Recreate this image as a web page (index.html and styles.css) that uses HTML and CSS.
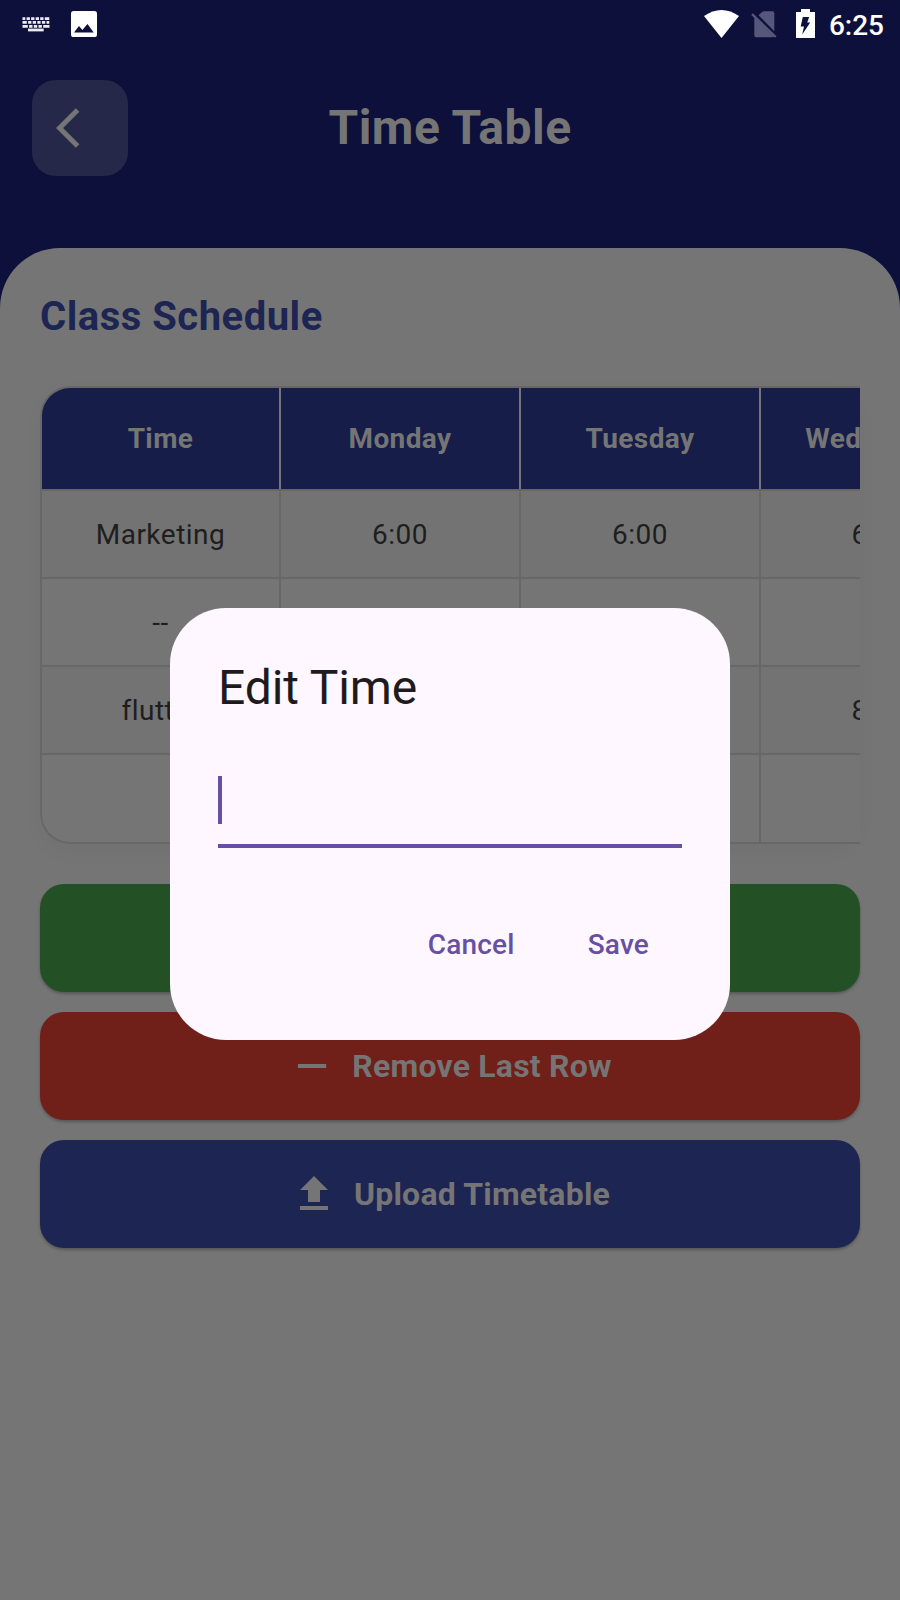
FILE: index.html
```html
<!DOCTYPE html>
<html lang="en">
<head>
<meta charset="utf-8">
<title>Time Table</title>
<link rel="stylesheet" href="styles.css">
</head>
<body>
<div class="screen">
  <div class="status">
    <div class="status-group">
      <svg class="kbd" width="28" height="15" viewBox="0 0 28 15">
        <g fill="none" stroke="#fff" stroke-opacity=".92" stroke-width="2.8">
          <path d="M.5 1.6H28" stroke-dasharray="2.800 1.300 3.300 1.200 3.300 1.300 3.300 1.200 3.300 1.300 4.500 20"/>
          <path d="M.5 5.400H28" stroke-dasharray="4.300 1.300 3.300 1.300 3.300 1.300 3.300 1.300 3.300 1.300 2.800 20"/>
          <path d="M.5 9.300H28" stroke-dasharray="5.300 1.300 3.400 1.300 3.400 1.300 3.400 1.300 6.300 20"/>
          <path d="M6 13H21.700"/>
        </g>
      </svg>
      <svg class="photo" width="26" height="26" viewBox="0 0 26 26"><rect width="26" height="26" rx="2.6" fill="#fff"/><path d="M3 21.4L8 15l3.4 4.1L16.500 13l6.200 8.400z" fill="#0c103a"/></svg>
    </div>
    <div class="status-group">
      <svg class="wifi" width="35" height="28" viewBox="0 0 35 28"><path d="M0 6Q17.500-6 35 6L17.500 28z" fill="#fff"/></svg>
      <svg class="sim" width="26" height="27" viewBox="0 0 26 27"><g fill="#55587a"><path d="M7.600 4.200L11 1q.9-.8 2-.8h8.300q2 0 2 2v18z"/><path d="M3.300 6.200L23 25.500q-.5.800-1.700.8H5.300q-2 0-2-2z"/></g><path d="M1 3.200L24.800 26" stroke="#55587a" stroke-width="2.300"/></svg>
      <svg class="battery" width="19" height="29" viewBox="0 0 19 29"><path d="M0 3h5V0h9v3h5v26H0z" fill="#fff"/><path d="M6.800 8h6.400l-2 5.500h3L6.200 25.500l1.800-8H4.700z" fill="#0c103a"/></svg>
      <span class="clock">6:25</span>
    </div>
  </div>

  <header class="header">
    <div class="back"><svg width="48" height="48" viewBox="0 0 24 24"><path d="M11.670 3.870L9.900 2.100 0 12l9.900 9.900 1.770-1.770L3.540 12z" fill="#757575"/></svg></div>
    <h1 class="title">Time Table</h1>
  </header>

  <main class="panel">
    <h2 class="heading">Class Schedule</h2>
    <div class="table-shadow">
      <div class="table-clip">
        <div class="table">
          <div class="row head"><div>Time</div><div>Monday</div><div>Tuesday</div><div>Wednesday</div></div>
          <div class="row odd"><div>Marketing</div><div>6:00</div><div>6:00</div><div>6:00</div></div>
          <div class="row"><div>--</div><div></div><div></div><div></div></div>
          <div class="row odd"><div>flutter</div><div></div><div></div><div>8:00</div></div>
          <div class="row"><div></div><div></div><div></div><div></div></div>
        </div>
      </div>
    </div>
    <div class="actions">
      <div class="action add"></div>
      <div class="action remove"><svg width="48" height="48" viewBox="0 0 24 24"><path d="M19.100 13H5v-2h14.100z" fill="#757575"/></svg><span>Remove Last Row</span></div>
      <div class="action upload"><svg width="48" height="48" viewBox="0 0 24 24"><path d="M9 16h6v-6h4l-7-7-7 7h4zm-4 2h14v2H5z" fill="#757575"/></svg><span>Upload Timetable</span></div>
    </div>
  </main>

  <div class="overlay">
    <div class="dialog">
      <div class="dialog-title">Edit Time</div>
      <div class="field"><div class="caret"></div></div>
      <div class="dialog-actions"><span>Cancel</span><span>Save</span></div>
    </div>
  </div>
</div>
</body>
</html>
```
FILE: styles.css
```css
* { box-sizing: border-box; }
body { margin: 0; font-family: Roboto, sans-serif; }
h1, h2 { margin: 0; }
svg { display: block; flex: none; }

.screen {
  position: relative;
  width: 900px;
  height: 1600px;
  overflow: hidden;
  background: #0d103b;
  display: flex;
  flex-direction: column;
}

.status {
  height: 48px;
  display: flex;
  justify-content: space-between;
  padding: 0 16px 0 22px;
}
.status-group { display: flex; align-items: flex-start; }
.kbd { margin-top: 17px; }
.photo { margin: 11px 0 0 21px; }
.wifi { margin-top: 10px; }
.sim { margin: 11px 0 0 12px; }
.battery { margin: 9px 0 0 19px; }
.clock {
  margin-left: 14px;
  font-size: 28px;
  font-weight: 500;
  line-height: 52px;
  color: #fff;
}

.header {
  height: 200px;
  padding: 32px;
  display: grid;
  grid-template-columns: 96px 1fr 96px;
  align-items: start;
}
.back {
  height: 96px;
  border-radius: 24px;
  background: #262849;
  padding: 24px;
}
.title {
  font-size: 48px;
  font-weight: 700;
  line-height: 96px;
  letter-spacing: .5px;
  text-align: center;
  color: #757575;
}

.panel {
  flex: 1;
  background: #757575;
  border-radius: 60px 60px 0 0;
  padding: 41px 40px 0;
}
.heading {
  font-size: 40px;
  font-weight: 700;
  line-height: 56px;
  letter-spacing: .5px;
  color: #1d2553;
}

.table-shadow {
  margin-top: 41px;
  height: 458px;
  border-radius: 30px;
  box-shadow: 0 8px 20px rgba(0, 0, 0, .035);
}
.table-clip {
  height: 458px;
  overflow: hidden;
  border-radius: 30px 0 0 30px;
}
.table {
  width: 962px;
  height: 458px;
  overflow: hidden;
  background: #757575;
  border: 2px solid #676767;
  border-radius: 30px;
}
.row {
  display: grid;
  grid-template-columns: 239px 240px 240px 239px;
  height: 88px;
  border-bottom: 2px solid #676767;
  font-size: 28px;
  letter-spacing: .5px;
  color: #1e1e1e;
}
.row > div {
  display: flex;
  align-items: center;
  justify-content: center;
  border-right: 2px solid #676767;
}
.row:last-child { border-bottom: 0; }
.odd { background: #737373; }
.head {
  height: 103px;
  background: #161d49;
  color: #757575;
  font-weight: 700;
  letter-spacing: .4px;
}
.head > div { border-right-color: #757575; }

.actions {
  margin-top: 40px;
  display: flex;
  flex-direction: column;
  gap: 20px;
}
.action {
  height: 108px;
  border-radius: 24px;
  display: flex;
  align-items: center;
  justify-content: center;
  gap: 16px;
  font-size: 32px;
  font-weight: 700;
  letter-spacing: .2px;
  color: #757575;
  box-shadow: 0 2px 3px rgba(0, 0, 0, .25);
}
.add { background: #235025; }
.remove { background: #701f19; }
.upload { background: #1d2553; }

.overlay {
  position: absolute;
  inset: 0;
  display: flex;
  justify-content: center;
  align-items: flex-start;
  padding-top: 608px;
}
.dialog {
  width: 560px;
  height: 432px;
  border-radius: 56px;
  background: #fef7ff;
  padding: 48px;
}
.dialog-title {
  font-size: 48px;
  line-height: 64px;
  letter-spacing: -.1px;
  color: #1d1b20;
}
.field {
  margin-top: 32px;
  height: 96px;
  padding-top: 24px;
  border-bottom: 4px solid #6750a4;
}
.caret {
  width: 4px;
  height: 48px;
  background: #6750a4;
}
.dialog-actions {
  margin-top: 48px;
  height: 96px;
  display: flex;
  justify-content: flex-end;
  align-items: center;
  gap: 73px;
  padding-right: 33px;
  font-size: 28px;
  font-weight: 500;
  letter-spacing: .2px;
  color: #6750a4;
}
```
